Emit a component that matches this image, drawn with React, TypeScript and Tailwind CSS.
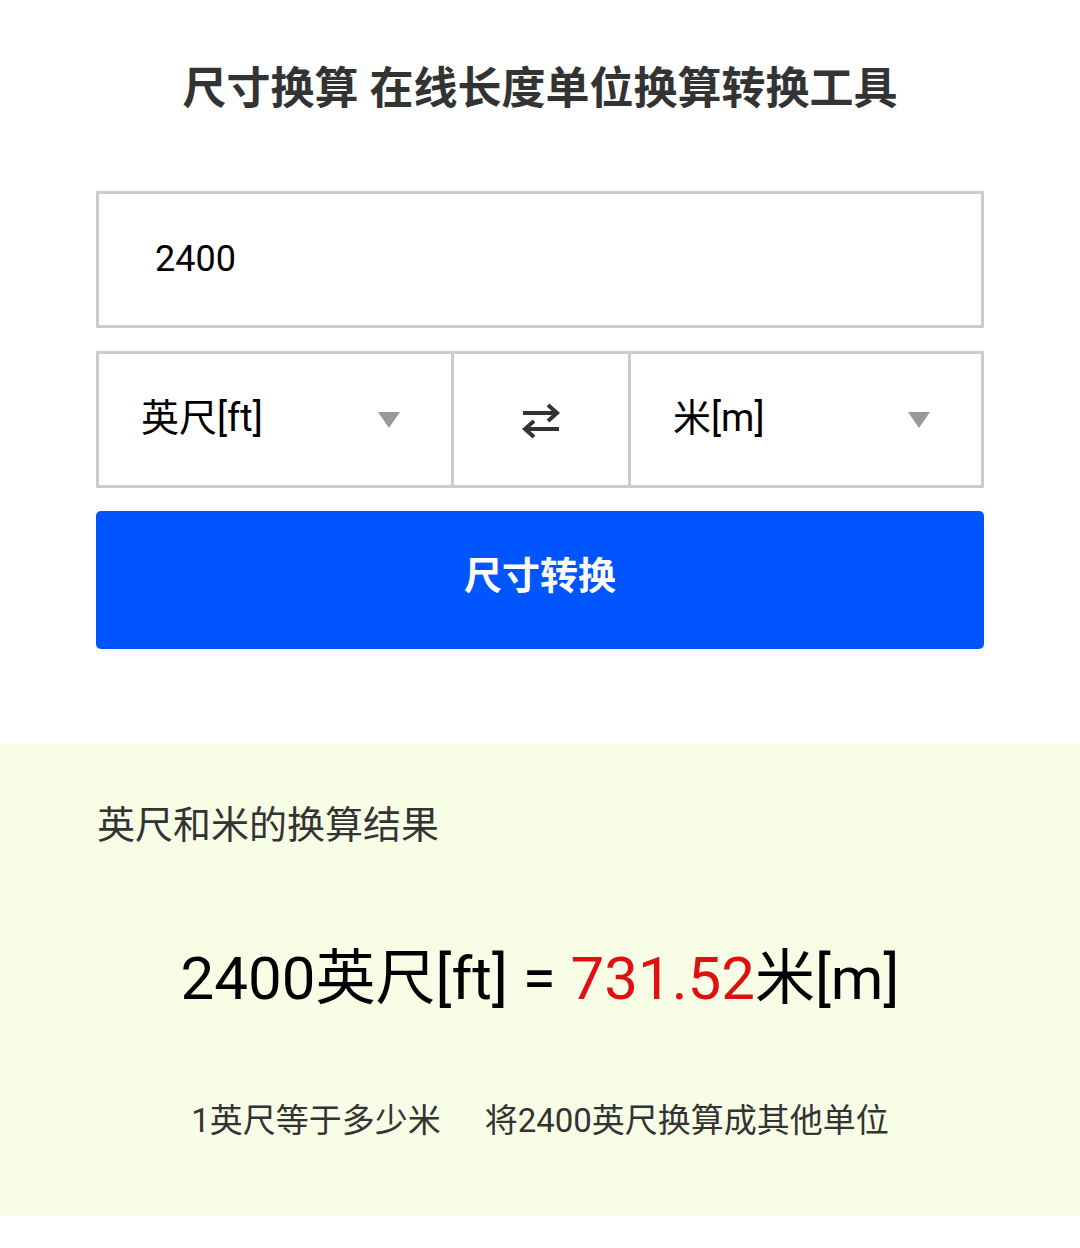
import React from 'react';

const font = { fontFamily: 'Roboto, "Noto Sans CJK SC", sans-serif' };

function Caret() {
  return (
    <svg width="24" height="18" viewBox="0 0 24 18" className="shrink-0">
      <path d="M1 1 L23 1 L12 17 Z" fill="#999999" />
    </svg>
  );
}

function SwapIcon() {
  return (
    <svg width="40" height="36" viewBox="0 0 40 36" fill="none" stroke="#333333" strokeWidth="4" strokeLinecap="butt" strokeLinejoin="miter">
      <path d="M2 11 H36" />
      <path d="M27 3 L36 11 L27 19" />
      <path d="M38 27 H4" />
      <path d="M13 19 L4 27 L13 35" />
    </svg>
  );
}

export default function App() {
  return (
    <div className="w-[1080px] min-h-[1248px] bg-white" style={font}>
      <h1 className="pt-[59px] text-center text-[44px] leading-[60px] font-bold text-[#333333]">
        尺寸换算 在线长度单位换算转换工具
      </h1>

      <div className="mx-[96px] mt-[72px] flex flex-col">
        <div className="h-[137px] border-[3px] border-[#cccccc] flex items-center pl-[56px] pb-[2px] text-[36px] text-black">
          2400
        </div>

        <div className="mt-[23px] h-[137px] border-[3px] border-[#cccccc] flex">
          <div className="w-[352px] flex items-center justify-between pl-[42px] pr-[50px] text-[38px] text-black">
            <span className="pb-[2px]">英尺[ft]</span>
            <Caret />
          </div>
          <div className="w-[180px] border-x-[3px] border-[#cccccc] flex items-center justify-center">
            <SwapIcon />
          </div>
          <div className="flex-1 flex items-center justify-between pl-[42px] pr-[50px] text-[38px] text-black">
            <span className="pb-[2px]">米[m]</span>
            <Caret />
          </div>
        </div>

        <button className="mt-[23px] h-[138px] rounded-[5px] bg-[#0055ff] text-white text-[38px] font-bold flex items-center justify-center pb-[8px]">
          尺寸转换
        </button>
      </div>

      <div className="mt-[95px] h-[472px] bg-[#f8fde6] px-[97px] pt-[55px]">
        <div className="text-[38px] leading-[52px] text-[#333333]">英尺和米的换算结果</div>
        <div className="mt-[88px] text-center text-[60px] leading-[80px] text-black">
          2400英尺[ft] = <span className="text-[#e01010]">731.52</span>米[m]
        </div>
        <div className="mt-[80px] flex justify-center gap-[44px] text-[33px] leading-[44px] text-[#333333]">
          <span>1英尺等于多少米</span>
          <span>将2400英尺换算成其他单位</span>
        </div>
      </div>
    </div>
  );
}
